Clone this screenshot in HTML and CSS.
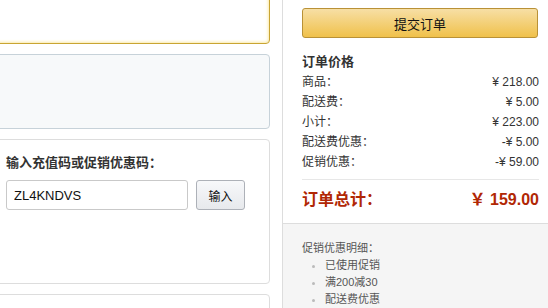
FILE: index.html
```html
<!DOCTYPE html>
<html lang="zh-CN">
<head>
  <meta charset="UTF-8">
  <title>结算</title>
  <link rel="stylesheet" href="styles.css">
</head>
<body>
  <div class="page">
    <div class="main">
      <div class="box box-active"></div>
      <div class="box box-info"></div>
      <div class="box box-code">
        <div class="code-label">输入充值码或促销优惠码：</div>
        <div class="code-row">
          <input type="text" class="code-input" value="ZL4KNDVS">
          <button class="btn-small">输入</button>
        </div>
      </div>
      <div class="box box-next"></div>
    </div>

    <div class="side">
      <div class="summary">
        <button class="btn-submit">提交订单</button>
        <h3>订单价格</h3>
        <div class="line"><span>商品：</span><span>¥ 218.00</span></div>
        <div class="line"><span>配送费：</span><span>¥ 5.00</span></div>
        <div class="line"><span>小计：</span><span>¥ 223.00</span></div>
        <div class="line"><span>配送费优惠：</span><span>-¥ 5.00</span></div>
        <div class="line"><span>促销优惠：</span><span>-¥ 59.00</span></div>
        <div class="total"><span>订单总计：</span><span>￥ 159.00</span></div>
      </div>
      <div class="promo">
        <div class="promo-title">促销优惠明细：</div>
        <ul>
          <li>已使用促销</li>
          <li>满200减30</li>
          <li>配送费优惠</li>
        </ul>
      </div>
    </div>
  </div>
</body>
</html>
```

FILE: styles.css
```css
body {
  margin: 0;
  font-family: "Liberation Sans", Arial, "Noto Sans CJK SC", sans-serif;
  color: #333;
  background: #fff;
  overflow: hidden;
}
.page {
  display: flex;
  gap: 12px;
  width: 548px;
  height: 308px;
  overflow: hidden;
}
.main {
  width: 282px;
  flex-shrink: 0;
  margin-left: -12px;
  margin-top: -30px;
  display: flex;
  flex-direction: column;
  gap: 10px;
}
.box {
  flex-shrink: 0;
  box-sizing: border-box;
  border: 1px solid #ddd;
  border-radius: 4px;
  background: #fff;
}
.box-active {
  height: 74px;
  border-color: #c9a533;
  box-shadow: inset 0 0 3px 1px #fbeaa9;
}
.box-info {
  height: 75px;
  background: #f7f9fa;
  border-color: #c7d2d9;
}
.box-code {
  height: 145px;
  padding: 14px 0 0 17px;
}
.box-next {
  height: 40px;
}
.code-label {
  font-size: 13px;
  font-weight: bold;
  line-height: 18px;
  margin-bottom: 8px;
}
.code-row {
  display: flex;
  gap: 8px;
}
.code-input {
  box-sizing: border-box;
  width: 182px;
  height: 30px;
  border: 1px solid #c9c9c9;
  border-radius: 3px;
  padding: 0 7px;
  font: 13px "Liberation Sans", Arial, sans-serif;
  color: #111;
}
.btn-small {
  box-sizing: border-box;
  width: 49px;
  height: 30px;
  border: 1px solid #adb1b8;
  border-radius: 3px;
  background: linear-gradient(#f7f8fa, #e7e9ec);
  font: 12px "Liberation Sans", "Noto Sans CJK SC", sans-serif;
  color: #111;
}
.side {
  width: 266px;
  flex-shrink: 0;
  border-left: 1px solid #ddd;
  display: flex;
  flex-direction: column;
}
.summary {
  padding: 8px 10px 0 19px;
  height: 223px;
  flex-shrink: 0;
  box-sizing: border-box;
}
.btn-submit {
  display: block;
  box-sizing: border-box;
  width: 236px;
  height: 30px;
  border: 1px solid #b99136;
  border-radius: 3px;
  background: linear-gradient(#f7dfa5, #f0c14b);
  font: 13px "Liberation Sans", "Noto Sans CJK SC", sans-serif;
  color: #111;
}
.summary h3 {
  margin: 15px 0 1px;
  font-size: 13px;
  line-height: 18px;
}
.line {
  display: flex;
  justify-content: space-between;
  font-size: 12px;
  line-height: 20px;
}
.total {
  display: flex;
  justify-content: space-between;
  margin-top: 7px;
  border-top: 1px solid #e7e7e7;
  padding-top: 9px;
  color: #b12704;
  font-size: 16px;
  font-weight: bold;
  line-height: 22px;
}
.promo {
  flex: 1;
  background: #f5f5f5;
  border-top: 1px solid #ddd;
  padding: 16px 0 0 19px;
  font-size: 11px;
  color: #555;
  line-height: 17px;
}
.promo ul {
  margin: 0;
  padding-left: 23px;
}
.promo li::marker {
  color: #bbb;
}
```
